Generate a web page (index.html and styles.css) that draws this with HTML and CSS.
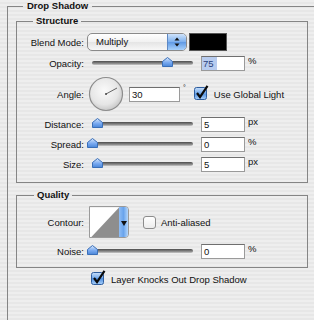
FILE: index.html
```html
<!DOCTYPE html>
<html lang="en">
<head>
  <meta charset="UTF-8">
  <title>Drop Shadow</title>
  <link rel="stylesheet" href="styles.css">
</head>
<body>
  <fieldset class="group outer">
    <legend>Drop Shadow</legend>

    <fieldset class="group structure">
      <legend>Structure</legend>

      <div class="row r-blend">
        <span class="lbl">Blend Mode:</span>
        <div class="popup">
          <span class="popup-text">Multiply</span>
          <span class="popup-arrows">
            <svg width="18" height="18" viewBox="0 0 18 18">
              <path d="M9 4.5 L11.5 7.5 H6.5 Z" fill="#111"/>
              <path d="M9 13.5 L11.5 10.5 H6.5 Z" fill="#111"/>
            </svg>
          </span>
        </div>
        <div class="swatch"></div>
      </div>

      <div class="row r-opacity">
        <span class="lbl">Opacity:</span>
        <div class="slider">
          <div class="track"></div>
          <svg class="thumb" style="left:70px" width="11" height="10" viewBox="0 0 11 10"><path d="M5.5 0.5 L10.5 4.5 V9.5 H0.5 V4.5 Z"/></svg>
        </div>
        <div class="field"><span class="sel">75</span></div>
        <span class="unit">%</span>
      </div>

      <div class="row r-angle">
        <span class="lbl">Angle:</span>
        <svg class="dial" width="36" height="36" viewBox="0 0 36 36">
          <defs>
            <radialGradient id="dialFill" cx="0.45" cy="0.4" r="0.6">
              <stop offset="0" stop-color="#fafafa"/>
              <stop offset="0.7" stop-color="#e6e6e6"/>
              <stop offset="1" stop-color="#c8c8c8"/>
            </radialGradient>
          </defs>
          <circle cx="18" cy="18" r="16.5" fill="url(#dialFill)" stroke="#8c8c8c" stroke-width="1.2"/>
          <line x1="18" y1="18" x2="29" y2="12" stroke="#555" stroke-width="0.9"/>
          <circle cx="18" cy="18" r="1" fill="#444"/>
        </svg>
        <div class="field wide">30</div>
        <span class="deg">°</span>
        <svg class="check on" width="15" height="15" viewBox="0 0 15 15">
          <rect x="0.5" y="2.5" width="12" height="12" rx="2" fill="url(#boxBlue)" stroke="#2e5d9e"/>
          <path d="M3 8 L6 12 L13.5 0.8" fill="none" stroke="#0a0a0a" stroke-width="2.2"/>
        </svg>
        <span class="ck-text">Use Global Light</span>
      </div>

      <div class="row r-distance">
        <span class="lbl">Distance:</span>
        <div class="slider">
          <div class="track"></div>
          <svg class="thumb" style="left:0px" width="11" height="10" viewBox="0 0 11 10"><path d="M5.5 0.5 L10.5 4.5 V9.5 H0.5 V4.5 Z"/></svg>
        </div>
        <div class="field">5</div>
        <span class="unit">px</span>
      </div>

      <div class="row r-spread">
        <span class="lbl">Spread:</span>
        <div class="slider">
          <div class="track"></div>
          <svg class="thumb" style="left:-5px" width="11" height="10" viewBox="0 0 11 10"><path d="M5.5 0.5 L10.5 4.5 V9.5 H0.5 V4.5 Z"/></svg>
        </div>
        <div class="field">0</div>
        <span class="unit">%</span>
      </div>

      <div class="row r-size">
        <span class="lbl">Size:</span>
        <div class="slider">
          <div class="track"></div>
          <svg class="thumb" style="left:0px" width="11" height="10" viewBox="0 0 11 10"><path d="M5.5 0.5 L10.5 4.5 V9.5 H0.5 V4.5 Z"/></svg>
        </div>
        <div class="field">5</div>
        <span class="unit">px</span>
      </div>
    </fieldset>

    <fieldset class="group quality">
      <legend>Quality</legend>

      <div class="row r-contour">
        <span class="lbl">Contour:</span>
        <div class="contour">
          <svg class="curve" width="30" height="32" viewBox="0 0 30 32">
            <rect width="30" height="32" fill="#fff"/>
            <path d="M0 32 L30 0 V32 Z" fill="#8e8e8e"/>
          </svg>
          <span class="contour-arrow">
            <svg width="10" height="32" viewBox="0 0 10 32"><path d="M2 14 H8 L5 19 Z" fill="#111"/></svg>
          </span>
        </div>
        <span class="box-off"></span>
        <span class="ck-text">Anti-aliased</span>
      </div>

      <div class="row r-noise">
        <span class="lbl">Noise:</span>
        <div class="slider">
          <div class="track"></div>
          <svg class="thumb" style="left:-5px" width="11" height="10" viewBox="0 0 11 10"><path d="M5.5 0.5 L10.5 4.5 V9.5 H0.5 V4.5 Z"/></svg>
        </div>
        <div class="field">0</div>
        <span class="unit">%</span>
      </div>
    </fieldset>

    <div class="row r-knocks">
      <svg class="check on" width="15" height="15" viewBox="0 0 15 15">
        <rect x="0.5" y="2.5" width="12" height="12" rx="2" fill="url(#boxBlue)" stroke="#2e5d9e"/>
        <path d="M3 8 L6 12 L13.5 0.8" fill="none" stroke="#0a0a0a" stroke-width="2.2"/>
      </svg>
      <span class="ck-text">Layer Knocks Out Drop Shadow</span>
    </div>
  </fieldset>

  <!-- shared gradients -->
  <svg class="defs" width="0" height="0">
    <defs>
      <linearGradient id="boxBlue" x1="0" y1="0" x2="0" y2="1">
        <stop offset="0" stop-color="#c9e0fb"/>
        <stop offset="0.5" stop-color="#6ea6ea"/>
        <stop offset="0.5" stop-color="#4f8fe0"/>
        <stop offset="1" stop-color="#a9d0fa"/>
      </linearGradient>
      <linearGradient id="thumbBlue" x1="0" y1="0" x2="0" y2="1">
        <stop offset="0" stop-color="#d8e8fb"/>
        <stop offset="0.55" stop-color="#7aaaf0"/>
        <stop offset="1" stop-color="#4a86d8"/>
      </linearGradient>
    </defs>
  </svg>
</body>
</html>
```

FILE: styles.css
```css
body {
  margin: 0;
  width: 314px;
  height: 320px;
  overflow: hidden;
  font-family: "Liberation Sans", Arial, sans-serif;
  font-size: 9.5px;
  color: #111;
  background: repeating-linear-gradient(#eeeeee 0, #eeeeee 2px, #e7e7e7 2px, #e7e7e7 4px);
}
.group {
  border: 1px solid #858585;
  padding: 0;
  margin: 0;
  min-width: 0;
}
.group legend {
  font-weight: bold;
  line-height: 12px;
  height: 12px;
  padding: 0 3px;
}
.outer {
  margin-left: 7px;
  padding-left: 8px;
  border-right: none;
  border-bottom: none;
  height: 320px;
  box-sizing: border-box;
}
.outer > legend {
  margin-left: 7px;
  padding: 0 4px;
}
.structure,
.quality {
  width: 292px;
  box-sizing: border-box;
}
.structure {
  margin-top: 3px;
  padding: 5px 0 8px;
}
.structure > legend {
  margin-left: 16px;
}
.quality > legend {
  margin-left: 17px;
}
.quality {
  margin-top: 6px;
  padding: 3px 0 6px;
}
.row {
  display: flex;
  align-items: center;
  height: 20px;
}
.lbl {
  width: 67px;
  flex: none;
  text-align: right;
}
.r-opacity { margin-top: 1px; }
.r-angle { height: 36px; margin-top: 3px; }
.r-distance { margin-top: 2px; }

/* popup menu */
.popup {
  margin-left: 3px;
  width: 100px;
  height: 18px;
  box-sizing: border-box;
  border: 1px solid #8a8a8a;
  border-radius: 5px;
  display: flex;
  overflow: hidden;
  background: linear-gradient(#ffffff, #f1f1f1 50%, #e4e4e4 50%, #f7f7f7);
}
.popup-text {
  flex: 1;
  padding-left: 8px;
  line-height: 16px;
}
.popup-arrows {
  width: 18px;
  border-left: 1px solid #5d88c4;
  background: linear-gradient(#cfe3fb, #7db0ee 50%, #5e98e4 50%, #a8d1fb);
}
.popup-arrows svg {
  display: block;
  margin-top: -1px;
}
.swatch {
  margin-left: 3px;
  width: 36px;
  height: 16px;
  background: #000;
  box-shadow: 0 0 0 1px #555;
}

/* sliders */
.slider {
  position: relative;
  margin-left: 8px;
  width: 101px;
  height: 12px;
  flex: none;
}
.track {
  margin-top: 4px;
  height: 4px;
  border-radius: 2px;
  background: linear-gradient(#4c4c4c, #8a8a8a 60%, #c9c9c9);
}
.thumb {
  position: absolute;
  top: 0;
}
.thumb path {
  fill: url(#thumbBlue);
  stroke: #3a6fb8;
  stroke-width: 1;
}

/* text fields */
.field {
  margin-left: 8px;
  width: 44px;
  height: 15px;
  box-sizing: border-box;
  flex: none;
  background: #fff;
  border: 1px solid #9a9a9a;
  border-top-color: #6f6f6f;
  padding-left: 2px;
  line-height: 13px;
}
.field.wide {
  margin-left: 5px;
  width: 51px;
}
.sel {
  display: inline-block;
  background: #b8ccef;
  padding: 0 3px 0 1px;
  margin-left: -2px;
  color: #2a3f7a;
}
.unit {
  margin-left: 3px;
  align-self: flex-start;
  margin-top: 2px;
}
.dial {
  margin-left: 4px;
  flex: none;
}
.deg {
  margin-left: 3px;
  align-self: flex-start;
  margin-top: 8px;
  font-size: 7px;
}
.check {
  flex: none;
}
.r-angle .check {
  margin-left: 8px;
  margin-top: -3px;
}
.ck-text {
  margin-left: 5px;
}

/* contour */
.r-contour {
  height: 36px;
}
.contour {
  margin-left: 5px;
  width: 40px;
  height: 32px;
  display: flex;
  box-sizing: border-box;
  border: 1px solid #9a9a9a;
  border-radius: 0 4px 4px 0;
  overflow: hidden;
}
.contour svg {
  display: block;
}
.contour-arrow {
  width: 9px;
  background: linear-gradient(90deg, #8fbdf5, #6aa4ec 50%, #b4d6fb);
}
.box-off {
  margin-left: 14px;
  width: 11px;
  height: 11px;
  border: 1px solid #8c8c8c;
  border-radius: 3px;
  background: linear-gradient(#ffffff, #ececec);
}
.r-noise {
  margin-top: 1px;
}
.r-knocks {
  margin-top: 1px;
  margin-left: 75px;
}
.r-knocks .check {
  margin-top: -3px;
}
.defs {
  position: absolute;
}
```
